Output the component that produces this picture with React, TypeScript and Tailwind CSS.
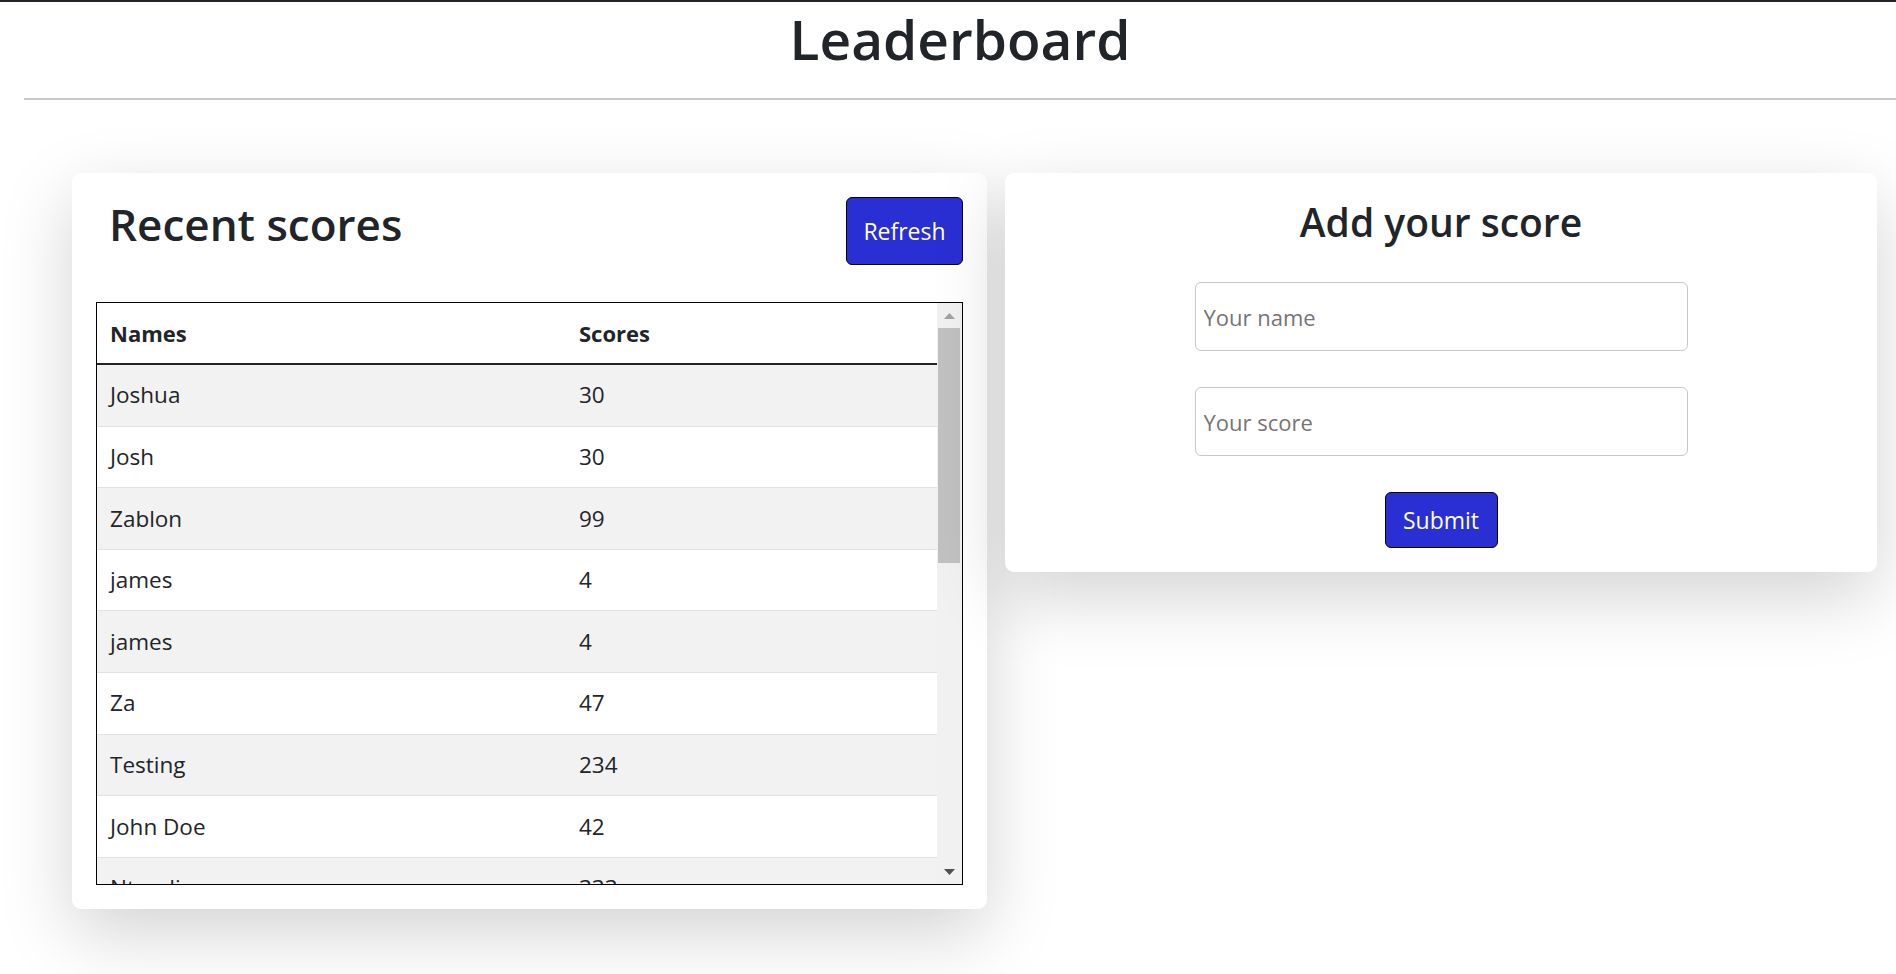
import React from "react";

const rows: { name: string; score: string }[] = [
  { name: "Joshua", score: "30" },
  { name: "Josh", score: "30" },
  { name: "Zablon", score: "99" },
  { name: "james", score: "4" },
  { name: "james", score: "4" },
  { name: "Za", score: "47" },
  { name: "Testing", score: "234" },
  { name: "John Doe", score: "42" },
  { name: "Ntandi", score: "333" },
];

export default function App() {
  return (
    <div className="min-h-screen bg-white font-['Open_Sans','Noto_Sans',sans-serif] text-[#212529]">
      <div className="h-[2px] bg-[#212529]" />
      <div className="ml-[24px]">
        <h1 className="pt-[1px] text-center text-[55px] font-semibold leading-[72px]">Leaderboard</h1>
        <div className="mt-[23px] h-[2px] bg-[#c9c9c9]" />
      </div>

      <div className="flex items-start gap-[18px] pl-[72px] pt-[73px]">
        {/* Left card */}
        <div className="w-[915px] rounded-[9px] bg-white p-[24px] shadow-[0_24px_72px_rgba(0,0,0,0.175)]">
          <div className="flex h-[68px] items-start justify-between">
            <h2 className="ml-[13px] text-[44px] font-semibold leading-[54px]">Recent scores</h2>
            <button className="flex h-[68px] w-[117px] items-center justify-center rounded-[6px] border border-black bg-[#2a2fd4] text-[23px] text-white">
              Refresh
            </button>
          </div>
          <div className="mt-[37px] flex h-[583px] border border-black">
            <div className="w-[840px] overflow-hidden">
              <div className="flex h-[62px] items-center border-b-2 border-[#212529] text-[22px] font-bold">
                <div className="w-[469px] pl-[13px]">Names</div>
                <div className="pl-[13px]">Scores</div>
              </div>
              {rows.map((r, i) => (
                <div
                  key={i}
                  className={`flex h-[61.6px] shrink-0 items-center border-b border-[#dee2e6] text-[22.5px] ${
                    i % 2 === 0 ? "bg-[#f2f2f2]" : "bg-white"
                  }`}
                >
                  <div className="w-[469px] pl-[13px]">{r.name}</div>
                  <div className="pl-[13px]">{r.score}</div>
                </div>
              ))}
            </div>
            <div className="flex w-[25px] flex-col bg-[#f1f1f1]">
              <div className="flex h-[25px] items-center justify-center">
                <svg width="11" height="6" viewBox="0 0 11 6">
                  <polygon points="5.5,0 11,6 0,6" fill="#a3a3a3" />
                </svg>
              </div>
              <div className="ml-[1px] h-[235px] w-[22px] bg-[#c1c1c1]" />
              <div className="flex-1" />
              <div className="flex h-[25px] items-center justify-center">
                <svg width="11" height="6" viewBox="0 0 11 6">
                  <polygon points="0,0 11,0 5.5,6" fill="#505050" />
                </svg>
              </div>
            </div>
          </div>
        </div>

        {/* Right card */}
        <div className="flex w-[872px] flex-col items-center rounded-[9px] bg-white p-[24px] shadow-[0_24px_72px_rgba(0,0,0,0.175)]">
          <h3 className="text-[39px] font-semibold leading-[50px]">Add your score</h3>
          <input
            className="mt-[35px] h-[69px] w-[493px] rounded-[6px] border border-[#c8c8c8] px-[8px] text-[22px] outline-none placeholder:text-[#757575]"
            placeholder="Your name"
          />
          <input
            className="mt-[36px] h-[69px] w-[493px] rounded-[6px] border border-[#c8c8c8] px-[8px] text-[22px] outline-none placeholder:text-[#757575]"
            placeholder="Your score"
          />
          <button className="mt-[36px] flex h-[56px] w-[113px] items-center justify-center rounded-[6px] border border-black bg-[#2a2fd4] text-[23px] text-white">
            Submit
          </button>
        </div>
      </div>
    </div>
  );
}
